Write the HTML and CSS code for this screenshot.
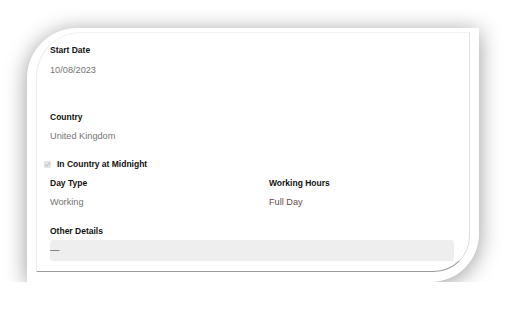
FILE: index.html
```html
<!DOCTYPE html>
<html>
<head>
  <title>Trip Day Details</title>
  <link rel="stylesheet" href="styles.css">
</head>
<body>
  <div id="frame">
    <div id="card">
      <div class="field">
        <p class="label">Start Date</p>
        <p class="value">10/08/2023</p>
      </div>
      <div class="field" id="countryField">
        <p class="label">Country</p>
        <p class="value">United Kingdom</p>
      </div>
      <div class="check-row">
        <span class="checkbox">
          <svg width="7" height="7" viewBox="0 0 7 7"><path d="M1.3 3.6 L2.9 5.1 L5.8 1.6" fill="none" stroke="#c4c4c4" stroke-width="1.1"/></svg>
        </span>
        <span class="label">In Country at Midnight</span>
      </div>
      <div class="columns">
        <div class="field">
          <p class="label">Day Type</p>
          <p class="value">Working</p>
        </div>
        <div class="field">
          <p class="label">Working Hours</p>
          <p class="value hours">Full Day</p>
        </div>
      </div>
      <div class="field" id="otherField">
        <p class="label">Other Details</p>
        <div class="details-box">&mdash;</div>
      </div>
    </div>
  </div>
</body>
</html>
```

FILE: styles.css
```css
body {
  background-color: #fff;
  margin: 0;
  font-family: "Liberation Sans", Arial, sans-serif;
}
#frame {
  margin: 28px 0 0 27px;
  width: 452px;
  height: 254px;
  box-sizing: border-box;
  padding: 4px 9px 10px 9px;
  background-color: #fff;
  border-radius: 50px 0 48px 0;
  box-shadow: 0 3px 22px rgba(0,0,0,0.4);
}
#card {
  height: 100%;
  box-sizing: border-box;
  padding: 11px 15px 11px 13px;
  border-top: 1px solid #f2f2f2;
  border-left: 1px solid #ececec;
  border-right: 1px solid #dedede;
  border-bottom: 1px solid #9a9a9a;
  border-radius: 45px 0 36px 0;
}
p {
  margin: 0;
}
.label {
  font-size: 8.5px;
  font-weight: bold;
  line-height: 12px;
  color: #111;
}
.value {
  font-size: 9.2px;
  line-height: 12px;
  color: #747474;
  margin-top: 8px;
}
.value.hours {
  color: #6a4a4a;
}
#countryField {
  margin-top: 35px;
}
#countryField .value,
.columns .value {
  margin-top: 7px;
}
.check-row {
  display: flex;
  align-items: center;
  gap: 6px;
  margin: 16px 0 0 -6px;
  height: 12px;
}
.checkbox {
  display: flex;
  width: 7px;
  height: 7px;
  box-sizing: border-box;
  background-color: #e4e4e4;
  border-radius: 1px;
}
.columns {
  display: grid;
  grid-template-columns: 219px 1fr;
  margin-top: 7px;
}
#otherField {
  margin-top: 17px;
}
.details-box {
  margin-top: 3px;
  height: 21px;
  background-color: #eeeeee;
  border-radius: 3px;
  font-size: 9.5px;
  line-height: 19px;
  color: #333;
}
```
